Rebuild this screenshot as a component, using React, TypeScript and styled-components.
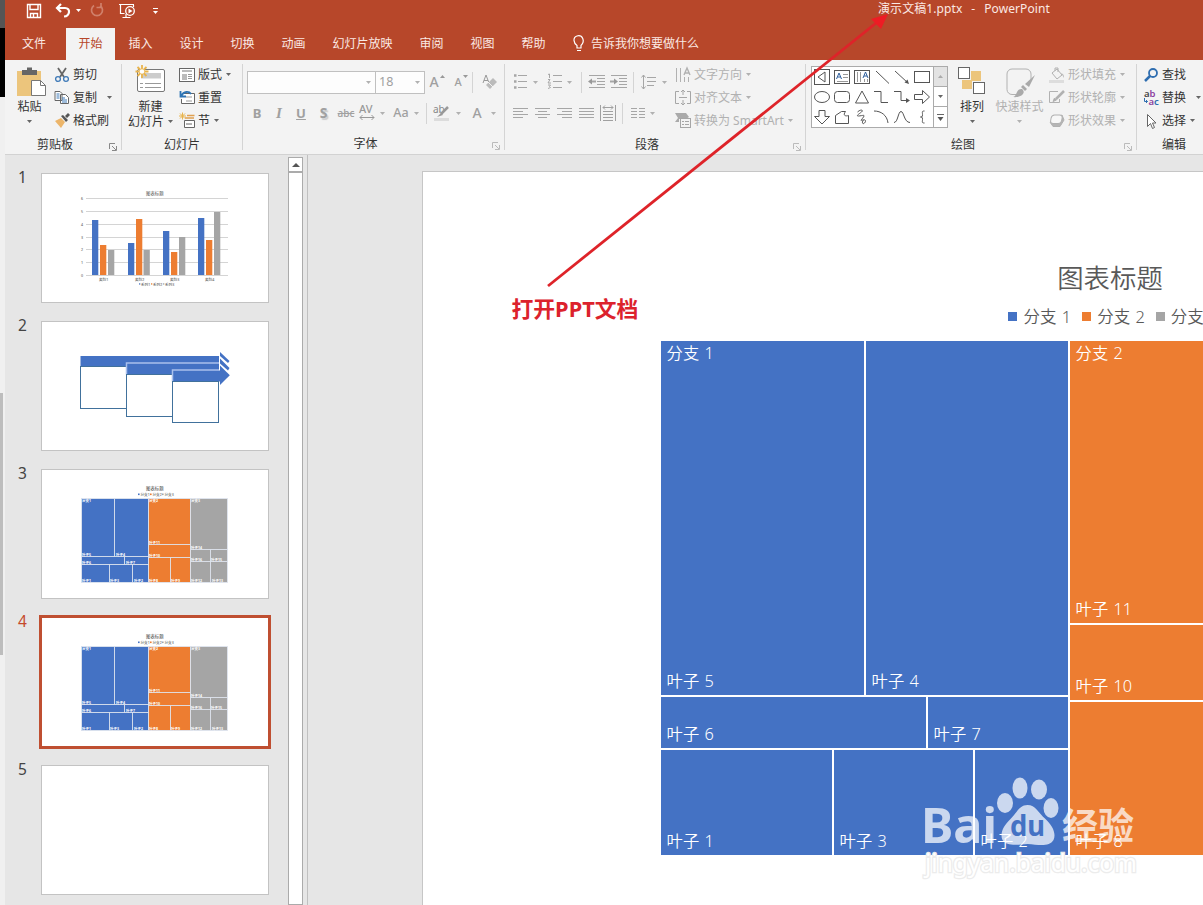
import React from "react";
import styled, { createGlobalStyle, css } from "styled-components";

const ui = `"Noto Sans", "Noto Sans CJK SC", sans-serif`;
const brand = "#b7472a";
const blue = "#4472c4";
const orange = "#ed7d31";
const grey = "#a5a5a5";
const off = "#b1b1b1";

const Global = createGlobalStyle`
  * { box-sizing: border-box; }
  body { margin: 0; overflow: hidden; }
  svg { display: block; flex: none; overflow: visible; }
`;

/* ---------- frame ---------- */
const Screen = styled.div`
  position: relative;
  display: flex;
  width: 1203px;
  height: 905px;
  overflow: hidden;
  font: 12px/16px ${ui};
  color: #333;
`;
const BackWindow = styled.div`
  width: 5px;
  flex: none;
  display: flex;
  flex-direction: column;
  background: #f0f0f0;
`;
const Strip = styled.div<{ h: number; c: string; w?: number }>`
  height: ${(p) => p.h}px;
  width: ${(p) => p.w ?? 5}px;
  background: ${(p) => p.c};
`;
const AppWindow = styled.div`
  flex: 1;
  min-width: 0;
  display: flex;
  flex-direction: column;
`;

/* ---------- title bar and tabs ---------- */
const TitleBar = styled.header`
  height: 28px;
  flex: none;
  display: flex;
  background: ${brand};
  color: #fbe9e4;
`;
const QuickAccess = styled.div`
  display: flex;
  width: 873px;
  padding: 2px 0 0 20px;
`;
const DocTitle = styled.div`
  line-height: 18px;
  white-space: pre;
  word-spacing: 1.3px;
  letter-spacing: 0.08px;
`;
const Tabs = styled.nav`
  height: 32px;
  flex: none;
  display: flex;
  background: ${brand};
  color: #fbe9e4;
`;
const Tab = styled.div<{ w: number; active?: boolean }>`
  width: ${(p) => p.w}px;
  text-align: center;
  line-height: 31px;
  white-space: nowrap;
  ${(p) => p.active && css`background: #f3f3f3; color: ${brand};`}
`;
const FileTab = styled(Tab)`
  margin-right: 3px;
`;
const TellMe = styled.div`
  display: flex;
  gap: 6px;
  padding-left: 14px;
  line-height: 32px;
`;

/* ---------- ribbon ---------- */
const Ribbon = styled.div`
  height: 95px;
  flex: none;
  display: flex;
  overflow: hidden;
  background: #f3f3f3;
  border-bottom: 1px solid #d2d2d2;
`;
const Group = styled.section<{ w: number; last?: boolean }>`
  width: ${(p) => p.w}px;
  flex: none;
  display: flex;
  flex-direction: column;
  margin: 4px 0;
  border-right: ${(p) => (p.last ? 0 : 1)}px solid #d4d4d4;
`;
const GroupBody = styled.div<{ pl?: number }>`
  display: flex;
  height: 69px;
  padding-left: ${(p) => p.pl ?? 0}px;
  margin-top: -1px;
`;
const GroupFoot = styled.div<{ shift?: number }>`
  display: grid;
  grid-template-columns: 16px 1fr 16px;
  height: 19px;
  line-height: 25px;
  text-align: center;
  & > span { transform: translateX(${(p) => p.shift ?? 0}px); }
  & > svg { margin: 11px 0 0 4px; }
`;
const BigButton = styled.div<{ w: number; disabled?: boolean; pt?: number }>`
  width: ${(p) => p.w}px;
  display: flex;
  flex-direction: column;
  align-items: center;
  padding-top: ${(p) => p.pt ?? 3}px;
  color: ${(p) => (p.disabled ? off : "#333")};
  line-height: 15px;
  white-space: nowrap;
`;
const BigIcon = styled.div`
  height: 33px;
`;
const CaretSlot = styled.div`
  height: 15px;
  padding-top: 6px;
`;
const LabelWithCaret = styled.div`
  display: flex;
  align-items: center;
  gap: 4px;
`;
const Stack = styled.div<{ ml?: number }>`
  margin-left: ${(p) => p.ml ?? 0}px;
  display: flex;
  flex-direction: column;
`;
const Command = styled.div<{ disabled?: boolean; gap?: number }>`
  display: flex;
  align-items: center;
  height: 23px;
  white-space: nowrap;
  color: ${(p) => (p.disabled ? off : "#333")};
  & > span { margin: 0 ${(p) => p.gap ?? 4}px 0 3px; }
`;
const ToolRow = styled.div<{ h: number; pl?: number }>`
  display: flex;
  align-items: center;
  height: ${(p) => p.h}px;
  padding-left: ${(p) => p.pl ?? 0}px;
  color: #a0a0a0;
`;
const Tool = styled.div<{ w: number; gap?: number }>`
  width: ${(p) => p.w}px;
  display: flex;
  justify-content: center;
  align-items: center;
  gap: ${(p) => p.gap ?? 6}px;
`;
const Glyph = styled.span<{ s?: number; b?: boolean; i?: boolean; line?: string; shadow?: boolean }>`
  font-size: ${(p) => p.s ?? 14}px;
  font-weight: ${(p) => (p.b ? 700 : 500)};
  font-style: ${(p) => (p.i ? "italic" : "normal")};
  font-family: ${(p) => (p.i ? `"Liberation Serif", serif` : ui)};
  text-decoration: ${(p) => p.line ?? "none"};
  text-shadow: ${(p) => (p.shadow ? "1.5px 1.5px 1px #ccc" : "none")};
`;
const Divider = styled.div`
  width: 1px;
  height: 21px;
  background: #d4d4d4;
`;
const Combo = styled.div<{ w: number }>`
  width: ${(p) => p.w}px;
  height: 23px;
  margin-right: -1px;
  display: flex;
  align-items: center;
  justify-content: space-between;
  padding: 0 4px 0 3px;
  border: 1px solid #c0c0c0;
  background: #fdfdfd;
  font-size: 12.5px;
`;
const Gallery = styled.div`
  display: flex;
  width: 137px;
  height: 62px;
  margin-top: 3px;
  border: 1px solid #ababab;
  background: #fff;
`;
const Shapes = styled.div`
  display: grid;
  grid-template-columns: repeat(6, 20px);
  grid-auto-rows: 20px;
  width: 121px;
  place-items: center;
`;
const Steps = styled.div`
  flex: 1;
  display: grid;
  grid-template-rows: repeat(3, 1fr);
`;
const Step = styled.div<{ disabled?: boolean }>`
  display: flex;
  align-items: center;
  justify-content: center;
  border-left: 1px solid #ababab;
  border-bottom: 1px solid #ababab;
  background: ${(p) => (p.disabled ? "#e3e3e3" : "#fff")};
  &:last-child { border-bottom: 0; }
`;

/* ---------- workspace ---------- */
const Workspace = styled.main`
  flex: 1;
  min-height: 0;
  display: flex;
  background: #e6e6e6;
`;
const ThumbPane = styled.aside`
  width: 283px;
  flex: none;
  padding-top: 18px;
  display: flex;
  flex-direction: column;
  gap: 18px;
`;
const ThumbRow = styled.div<{ active?: boolean }>`
  display: flex;
  padding-left: 13px;
  height: 130px;
  flex: none;
  color: ${(p) => (p.active ? "#c5492b" : "#444")};
  font-size: 15.5px;
  line-height: 8px;
`;
const ThumbNo = styled.div`
  width: 23px;
`;
const Thumb = styled.div<{ active?: boolean }>`
  width: 228px;
  height: 130px;
  background: #fff;
  border: 1px solid ${(p) => (p.active ? "#fff" : "#c3c3c3")};
  outline: ${(p) => (p.active ? "3px solid #bf4f31" : "none")};
  outline-offset: -1px;
`;
const ScrollTrack = styled.div`
  width: 15px;
  margin-top: 2px;
  flex: none;
  background: #fff;
  border: 1px solid #ababab;
`;
const ScrollUp = styled.div`
  height: 15px;
  display: flex;
  align-items: center;
  justify-content: center;
  border-bottom: 2px solid #ababab;
`;
const EditPane = styled.div`
  flex: 1;
  min-width: 0;
  margin-left: 4px;
  border-left: 1px solid #c0c0c0;
  padding: 16px 0 0 114px;
`;
const Slide = styled.div`
  width: 1376px;
  height: 774px;
  background: #fff;
  border: 1px solid #c6c6c6;
  padding: 84px 0 0 238px;
`;
const ChartBox = styled.div`
  width: 898px;
  color: #595959;
  font-weight: 350;
`;
const ChartTitle = styled.div`
  font-size: 26.4px;
  line-height: 44px;
  text-align: center;
`;
const Legend = styled.div`
  display: flex;
  justify-content: center;
  gap: 11px;
  height: 32px;
  margin-bottom: 9px;
  padding-left: 7px;
  font-size: 16.5px;
  line-height: 31px;
  word-spacing: 1px;
  white-space: nowrap;
`;
const LegendItem = styled.div<{ c: string }>`
  display: flex;
  align-items: center;
  gap: 6px;
  &::before {
    content: "";
    width: 9px;
    height: 9px;
    background: ${(p) => p.c};
  }
`;
const TreeMap = styled.div`
  display: flex;
  gap: 2px;
  height: 514px;
`;
const Branch = styled.div<{ w: number }>`
  width: ${(p) => p.w}px;
  display: flex;
  flex-direction: column;
  gap: 2px;
`;
const Band = styled.div<{ h: number }>`
  height: ${(p) => p.h}px;
  display: flex;
  gap: 2px;
`;
const Leaf = styled.div<{ w: number; c: string }>`
  width: ${(p) => p.w}px;
  background: ${(p) => p.c};
  color: #fff;
  display: flex;
  flex-direction: column;
  justify-content: space-between;
  padding: 0 5.6px 2px;
  font-size: 16.3px;
  line-height: 24px;
  word-spacing: 1px;
  white-space: nowrap;
  & > :only-child { margin-top: auto; }
`;

/* ---------- overlays ---------- */
const Overlay = styled.svg`
  position: absolute;
  left: 0;
  top: 0;
  pointer-events: none;
`;
const Callout = styled.div`
  position: absolute;
  left: 511.5px;
  top: 293.5px;
  font-size: 21.8px;
  line-height: 30px;
  font-weight: 700;
  color: #dc222c;
  white-space: nowrap;
`;

/* ---------- icons ---------- */
type IconProps = { w?: number; h?: number; c?: string; f?: string; children?: React.ReactNode };
const Icon = ({ w = 16, h = 16, c = "#666", f = "none", children }: IconProps) => (
  <svg width={w} height={h} viewBox={`0 0 ${w} ${h}`} fill={f} stroke={c}>{children}</svg>
);
const Caret = ({ c = "#666" }: { c?: string }) => (
  <svg width="5" height="3" viewBox="0 0 5 3"><path d="M0 0h5L2.5 3z" fill={c} /></svg>
);
const Launcher = ({ c = "#888" }: { c?: string }) => (
  <Icon w={8} h={8} c={c}><path d="M.5 6V.5H6M3 3l4 4M7.5 3v4.5H3" /></Icon>
);
const Lines = ({ rows, w = 15 }: { rows: [number, number][]; w?: number }) => (
  <Icon w={w} h={14} c="#a6a6a6">
    {rows.map(([a, b], i) => <path key={i} d={`M${a} ${i * 3 + 2.5}H${b}`} />)}
  </Icon>
);

const shapes = [
  <><rect x="2.5" y="2.5" width="15" height="15" /><path d="M13 5v10L6 10z" /></>,
  <><rect x="2.5" y="3.5" width="15" height="13" /><path d="M4.5 12L7 6l2.5 6M5.5 10h3" stroke="#2f5f9c" /><path d="M11 7.5h5M11 10.5h5M5 14.5h11" stroke="#999" /></>,
  <><rect x="2.5" y="3.5" width="15" height="13" /><path d="M5.5 5v10M8.5 5v10M12.5 12v3M15.5 12v3" stroke="#999" /><path d="M11 11l2.5-6 2.5 6M12 9h3" stroke="#2f5f9c" /></>,
  <path d="M4 4l13 12.5" />,
  <><path d="M3 4l13 12" /><path d="M17 17l-4.5-1.5 3-3z" fill="#555" stroke="none" /></>,
  <rect x="2.5" y="4.5" width="15" height="11" />,
  <ellipse cx="10" cy="10" rx="7.5" ry="5.5" />,
  <rect x="2.5" y="4.5" width="15" height="11" rx="3" />,
  <path d="M10 4l6.5 12h-13z" />,
  <path d="M2 4.5h7v11h7" />,
  <><path d="M2 4.5h7v9h6" /><path d="M18 13.5l-4-2.5v5z" fill="#555" stroke="none" /></>,
  <path d="M2.5 7.5h8v-4l7 6.5-7 6.5v-4h-8z" />,
  <path d="M7 3.5h6v6h4.5L10 17 2.5 9.5H7z" />,
  <path d="M3.5 16.5v-8l6-4h4c-3 4 0 5 3 4v8z" />,
  <path d="M5.5 5c3-3 6.5-2 4 0s-6 4-3 4 7-2 5 1-4 4-1 3 4 1 2 3-3-1-1-3" />,
  <path d="M2 4c7 0 13 4 14 12" />,
  <path d="M2 15.5c4 0 4-11 7-11s3 11 9 11" />,
  <path d="M12.5 4c-3 0-2 1-2 3.5S10 10 8.5 10c1.5 0 2 0 2 2.5s-1 3.500 2 3.500" />,
];

const tabs: [string, number][] = [["插入", 51], ["设计", 51], ["切换", 51], ["动画", 51], ["幻灯片放映", 87], ["审阅", 51], ["视图", 51], ["帮助", 51]];

/* ---------- thumbnails ---------- */
const tiny = { fontSize: 3.6, fill: "#666", fontWeight: 500 };
const bars: [number, number, string][] = [
  [92, 220, blue], [100, 245, orange], [108, 250, grey], [128, 243, blue], [136, 219, orange], [143.5, 250, grey],
  [163, 231, blue], [171, 252, orange], [179, 237, grey], [198, 218, blue], [206, 240, orange], [214, 212, grey],
];
const ColumnThumb = () => (
  <svg width="226" height="128" viewBox="42 174 226 128">
    <text x="146" y="194.5" fontSize="4.4" fill="#555">图表标题</text>
    {[198.5, 211.5, 224.5, 237.5, 249.5, 262.5, 275.5].map((y, i) => (
      <g key={y}><path d={`M86 ${y}H228`} stroke="#d4d4d4" /><text x="81" y={y + 1.2} {...tiny}>{6 - i}</text></g>
    ))}
    {bars.map(([x, y, c]) => <rect key={x} x={x} y={y} width="6.3" height={275 - y} fill={c} />)}
    {[99, 135, 170, 205].map((x, i) => <text key={x} x={x} y="280.5" {...tiny}>类别{i + 1}</text>)}
    {[blue, orange, grey].map((c, i) => (
      <g key={c}><rect x={139 + i * 12} y="283.3" width="1.3" height="1.3" fill={c} /><text x={141 + i * 12} y="285.5" {...tiny}>系列{i + 1}</text></g>
    ))}
  </svg>
);
const steps: [number, number, number, number][] = [[80.5, 356, 366.5, 42], [126.5, 363.5, 374.5, 42], [172.5, 370.5, 381.5, 41]];
const heads = ["M220 352l9.500 9-1.500 2-8-7z", "M220 358.500l9.500 9.500-1.500 2.500-8-7z", "M220 365.500l9.800 9.700-9.800 9.700z"];
const ArrowThumb = () => (
  <svg width="226" height="128" viewBox="42 322 226 128">
    {heads.map((d) => <path key={d} d={d} fill={blue} />)}
    {steps.map(([x, y, b, h]) => (
      <g key={x}>
        <rect x={x} y={y} width={(x > 150 ? 220.5 : 219) - x} height={b - y} fill={blue} />
        {x > 100 && <path d={`M${x} ${b}V${y - 0.5}H219`} fill="none" stroke="#a9c0ec" strokeWidth="1.5" />}
        <rect x={x} y={b} width="46" height={h} fill="#fff" stroke="#41719c" />
      </g>
    ))}
  </svg>
);
const leafLabels: [number, number, string][] = [
  [82, 502, "分支1"], [149, 502, "分支2"], [191, 502, "分支3"], [82, 555.5, "叶子5"], [116, 555.5, "叶子4"],
  [82, 563.5, "叶子6"], [126, 563.5, "叶子7"], [82, 581.5, "叶子1"], [110, 581.5, "叶子3"], [134, 581.5, "叶子2"],
  [149, 543.5, "叶子11"], [149, 556.5, "叶子10"], [149, 581.5, "叶子8"], [171, 581.5, "叶子9"],
  [191, 548.5, "叶子14"], [191, 560.5, "叶子16"], [211, 560.5, "叶子15"], [191, 581.5, "叶子12"], [212, 581.5, "叶子13"],
];
const TreeThumb = () => (
  <svg width="226" height="128" viewBox="42 470 226 128">
    <text x="146" y="489.5" fontSize="4.4" fill="#444">图表标题</text>
    {[blue, orange, grey].map((c, i) => (
      <g key={c}><rect x={138 + i * 12} y="493.5" width="1.6" height="1.6" fill={c} /><text x={140.5 + i * 12} y="495.8" {...tiny}>分支{i + 1}</text></g>
    ))}
    <rect x="81.5" y="498.5" width="67" height="84" fill={blue} />
    <rect x="148.5" y="498.5" width="42" height="84" fill={orange} />
    <rect x="190.5" y="498.5" width="37" height="84" fill={grey} />
    <path d="M81.5 498.5H227.5V582.5H81.5zM114.5 498.5V556.5M81.5 556.5H148.5M124.5 556.5V564.5M81.5 564.5H148.5M109.5 564.5V582.5M132.5 564.5V582.5M148.5 498.5V582.5M148.5 544.5H190.5M148.5 557.5H190.5M170.5 557.5V582.5M190.5 498.5V582.5M190.5 549.5H227.5M190.5 561.5H227.5M210.5 549.5V582.5" fill="none" stroke="#dfe4ee" strokeWidth=".9" />
    {leafLabels.map(([x, y, t]) => <text key={t} x={x} y={y} fontSize="3.5" fontWeight="700" fill="#fff">{t}</text>)}
  </svg>
);
const thumbs = [ColumnThumb, ArrowThumb, TreeThumb, TreeThumb, null];

export default function App() {
  return (
    <Screen>
      <Global />
      <BackWindow>
        <Strip h={28} c="#555" />
        <Strip h={69} c="#000" />
        <Strip h={296} c="#f0f0f0" />
        <Strip h={262} w={3} c="#bdbdbd" />
      </BackWindow>
      <AppWindow>
        <TitleBar>
          <QuickAccess>
            <Icon w={27} h={18} c="#fff">
              <path d="M2.5 2.5h13v13h-13zM5 2.500v5h8v-5M5.500 15.500v-4h7v4M8.500 12v3" strokeWidth="1.4" />
            </Icon>
            <Icon w={38} h={18} c="#fff">
              <path d="M9 2L5 6l4 4M5.500 6H13c6 0 5 8-1 8.500" strokeWidth="2.2" />
              <path d="M24 7h5l-2.500 3z" fill="#fff" stroke="none" />
            </Icon>
            <Icon w={28} h={18} c="#d0806b">
              <path d="M4 3.500a5.500 5.500 0 1 0 6 0M11 1v4.500H6.500" strokeWidth="1.7" />
            </Icon>
            <Icon w={30} h={18} c="#fff">
              <path d="M1 2.500h15M2.500 3v8.500h4M8 12v3.500M4.500 15.500h8M15.500 3v2" strokeWidth="1.2" />
              <circle cx="12" cy="9" r="4.300" strokeWidth="1.3" /><path d="M10.500 6.500v5l4-2.500z" fill="#fff" stroke="none" />
            </Icon>
            <Icon w={12} h={18} c="#fff"><path d="M5 6.500h5" /><path d="M5 9h5l-2.500 3z" fill="#fff" stroke="none" /></Icon>
          </QuickAccess>
          <DocTitle>演示文稿1.pptx  -  PowerPoint</DocTitle>
        </TitleBar>
        <Tabs>
          <FileTab w={58}>文件</FileTab>
          <Tab w={49} active>开始</Tab>
          {tabs.map(([t, w]) => <Tab key={t} w={w}>{t}</Tab>)}
          <TellMe>
            <Icon w={12} h={30} c="#fff">
              <path d="M4 20v-2.500C.500 15-.500 9.500 4 8c5.500-1.500 8.500 5 4 9.500V20zM4 22.500h4" strokeWidth="1.2" />
            </Icon>
            <span>告诉我你想要做什么</span>
          </TellMe>
        </Tabs>

        <Ribbon>
          <Group w={117}>
            <GroupBody pl={9}>
              <BigButton w={31}>
                <BigIcon>
                  <Icon w={26} h={32} c="none">
                    <path d="M0 5h24v25H0z" fill="#ecc57c" /><path d="M5 4h5V1.500h5V4h5v5H5z" fill="#666" />
                    <path d="M14.500 14.500h9l5 5v10h-14z" fill="#fff" stroke="#777" /><path d="M23.500 14.500v5h5" stroke="#777" />
                  </Icon>
                </BigIcon>
                粘贴
                <CaretSlot><Caret /></CaretSlot>
              </BigButton>
              <Stack ml={9}>
                <Command>
                  <Icon><path d="M4 1l6 9M12 1L6 10" strokeWidth="1.8" /><circle cx="4" cy="12" r="2.4" stroke="#3f7ab8" strokeWidth="1.3" /><circle cx="12" cy="12" r="2.4" stroke="#3f7ab8" strokeWidth="1.3" /></Icon>
                  <span>剪切</span>
                </Command>
                <Command gap={10}>
                  <Icon><path d="M1 1.500h5l2 2v7H1zM6.500 4.500h5l3 3v6h-8z" fill="#fff" /><path d="M2.500 4h3M2.500 6h3M2.500 8h3M8 8h3M8 10h5M8 12h5" stroke="#3f7ab8" /></Icon>
                  <span>复制</span><Caret />
                </Command>
                <Command>
                  <Icon c="none"><path d="M1 8l6-3 4 4-4 6z" fill="#ecb56a" /><path d="M7 3l2-1 5 5-2 2zM11 3l3-3 2 2-3 3z" fill="#555" /></Icon>
                  <span>格式刷</span>
                </Command>
              </Stack>
            </GroupBody>
            <GroupFoot shift={-8}><i /><span>剪贴板</span><Launcher /></GroupFoot>
          </Group>

          <Group w={121}>
            <GroupBody pl={5}>
              <BigButton w={47}>
                <BigIcon>
                  <Icon w={30} h={30}>
                    <rect x="1.5" y="3.5" width="27" height="22" rx="1.5" fill="#fff" stroke="#777" /><path d="M5 7h20v5.500H5z" fill="#ccc" stroke="none" /><path d="M4 17.500h3M9 17.500h16M4 21.500h3M9 21.500h16" stroke="#999" />
                    <path d="M6-1v13M-.5 5.500h13M1.500 1l9 9M10.500 1l-9 9" stroke="#e9b44c" strokeWidth="1.8" /><circle cx="6" cy="5.5" r="2.3" fill="#fff" stroke="none" />
                  </Icon>
                </BigIcon>
                新建
                <LabelWithCaret>幻灯片<Caret /></LabelWithCaret>
              </BigButton>
              <Stack ml={5}>
                <Command>
                  <Icon><rect x=".5" y="1.5" width="15" height="13" fill="#fff" /><path d="M3 3h10v2H3zM3 7h5v6H3z" fill="#bbb" stroke="none" /><path d="M9 7.500h4M9 9.500h4M9 11.500h4" stroke="#999" /></Icon>
                  <span>版式</span><Caret />
                </Command>
                <Command>
                  <Icon><path d="M4.500 3.500h11v10h-13V9" fill="#fff" /><path d="M7 7h6M7 11h6" stroke="#999" /><path d="M1.500 1v5.500H7M2 6C5 1 10 1 12 4" stroke="#2f75b5" strokeWidth="1.8" /></Icon>
                  <span>重置</span>
                </Command>
                <Command>
                  <Icon><path d="M8 2.500h7.500M6 5h9" stroke="#e0a050" strokeWidth="1.5" /><path d="M5.500 7.500h10v7h-10zM7 11h6" fill="#fff" /><path d="M3.500-.5v7M0 3h7M1 .5l5 5M6 .5l-5 5" stroke="#e9b44c" /></Icon>
                  <span>节</span><Caret />
                </Command>
              </Stack>
            </GroupBody>
            <GroupFoot><i /><span>幻灯片</span></GroupFoot>
          </Group>

          <Group w={262}>
            <GroupBody pl={3}>
              <Stack>
                <ToolRow h={38} pl={1}>
                  <Combo w={129}><i /><Caret c={off} /></Combo>
                  <Combo w={50}><span>18</span><Caret c={off} /></Combo>
                  <Tool w={31}><Glyph s={14}>A</Glyph><Icon w={5} h={14} c="none"><path d="M-5 3h5l-2.500-3z" fill="#999" /></Icon></Tool>
                  <Tool w={17}><Glyph s={11}>A</Glyph><Icon w={5} h={14} c="none"><path d="M-5 0h5l-2.500 3z" fill="#999" /></Icon></Tool>
                  <Divider />
                  <Tool w={32}><Icon w={15} h={16} c="#999"><path d="M1 9L4 1l3 8M2 6.500h4" /><path d="M4 11l7-7 4 4-7 7z" fill="#bbb" stroke="none" /><path d="M6 8l5 5" stroke="#f3f3f3" /></Icon></Tool>
                </ToolRow>
                <ToolRow h={24}>
                  <Tool w={22}><Glyph s={13} b>B</Glyph></Tool>
                  <Tool w={22}><Glyph s={15} b i>I</Glyph></Tool>
                  <Tool w={22}><Glyph s={13} b line="underline">U</Glyph></Tool>
                  <Tool w={23}><Glyph s={14} b shadow>S</Glyph></Tool>
                  <Tool w={22}><Glyph s={10} line="line-through">abc</Glyph></Tool>
                  <Tool w={30} gap={5}>
                    <Icon w={16} h={16} c="#999"><text x="0" y="8" fontSize="11" fontWeight="500" fill="#999" stroke="none">AV</text><path d="M1 12.500h14M3.500 10l-2.500 2.500 2.500 2.500M12.500 10l2.500 2.500-2.500 2.500" /></Icon>
                    <Caret c={off} />
                  </Tool>
                  <Tool w={38} gap={5}><Glyph s={12.5}>Aa</Glyph><Caret c={off} /></Tool>
                  <Tool w={2}><Divider /></Tool>
                  <Tool w={40}>
                    <Icon w={17} h={16}><text x="0" y="8" fontSize="10" fill="#888" stroke="none">ab</text><path d="M15 2L8 9" stroke="#999" strokeWidth="2.5" /><path d="M1 13h15v3H1z" fill="#dcdcdc" stroke="none" /><path d="M4 12l4-4 2 2z" fill="#999" stroke="none" /></Icon>
                    <Caret c={off} />
                  </Tool>
                  <Tool w={34} gap={9}><Glyph s={14}>A</Glyph><Caret c={off} /></Tool>
                </ToolRow>
              </Stack>
            </GroupBody>
            <GroupFoot shift={-8}><i /><span>字体</span><Launcher c="#bbb" /></GroupFoot>
          </Group>

          <Group w={301}>
            <GroupBody pl={7}>
              <Stack>
                <ToolRow h={38}>
                  <Tool w={26}><Icon w={14} h={16} c="#a6a6a6"><path d="M5 1.500h9M5 7.500h9M5 13.500h9" /><path d="M1 1.500h2.500M1 7.500h2.500M1 13.500h2.500" strokeWidth="2.4" /></Icon><Caret c={off} /></Tool>
                  <Tool w={43} gap={5}><Icon w={15} h={16} c="#a6a6a6"><path d="M6 1.500h9M6 7.500h9M6 13.500h9M1 .500l1.500-.5v4M1 5.500h2l-2 3.500h3M1 11h2.500l-1 1.500 1 1-2.500 1" /></Icon><Caret c={off} /></Tool>
                  <Divider />
                  <Tool w={28}><Icon w={17} h={14} c="#a6a6a6"><path d="M1 .500h16M9 3.500h8M9 6.500h8M9 9.500h8M1 12.500h16" /><path d="M8 6.500H2" strokeWidth="2" /><path d="M0 6.500l4-3v6z" fill="#999" stroke="none" /></Icon></Tool>
                  <Tool w={17}><Icon w={17} h={14} c="#a6a6a6"><path d="M1 .500h16M9 3.500h8M9 6.500h8M9 9.500h8M1 12.500h16" /><path d="M0 6.500h5" strokeWidth="2" /><path d="M8 6.500l-4-3v6z" fill="#999" stroke="none" /></Icon></Tool>
                  <Tool w={12}><Divider /></Tool>
                  <Tool w={30}><Icon w={15} h={18} c="#a6a6a6"><path d="M6 4.500h9M6 8.500h9M6 12.500h7M2.500 2v14M.500 4.500l2-2.500 2 2.500M.500 13.500l2 2.500 2-2.500" /></Icon><Caret c={off} /></Tool>
                </ToolRow>
                <ToolRow h={24}>
                  <Tool w={17}><Lines rows={[[0, 15], [0, 10], [0, 15], [0, 10]]} /></Tool>
                  <Tool w={27}><Lines rows={[[0, 15], [3, 12], [0, 15], [3, 12]]} /></Tool>
                  <Tool w={17}><Lines rows={[[0, 15], [5, 15], [0, 15], [5, 15]]} /></Tool>
                  <Tool w={27}><Lines rows={[[0, 15], [0, 15], [0, 15], [0, 15]]} /></Tool>
                  <Tool w={15}><Icon w={16} h={16} c="#a0a0a0"><path d="M.500 0v16M15.500 0v16M3 2.500h10M5 .500l-2 2 2 2M11 .500l2 2-2 2M3 6.500h10M3 9.500h10M3 12.500h10M3 15.500h10" /></Icon></Tool>
                  <Tool w={14}><Divider /></Tool>
                  <Tool w={28} gap={5}><Icon w={14} h={14} c="#a6a6a6"><path d="M0 2.500h6M8 2.500h6M0 5.500h6M8 5.500h6M0 8.500h6M8 8.500h6M0 11.500h6M8 11.500h6" /></Icon><Caret c={off} /></Tool>
                </ToolRow>
              </Stack>
              <Stack ml={6}>
                <Command disabled gap={4}>
                  <Icon c={off}><path d="M1.500 1v14M5.500 1v14M9.500 10v5M13.500 10v5" /><path d="M9 8l3-7 3 7M10 6h4" strokeWidth="1.4" /></Icon>
                  <span>文字方向</span><Caret c={off} />
                </Command>
                <Command disabled gap={4}>
                  <Icon c="#a6a6a6"><path d="M4 1.500H.500v12H4M12 1.500h3.500v12H12M4 7.500h8M8 0v5M6 2l2-2 2 2M8 10v5M6 13l2 2 2-2" /></Icon>
                  <span>对齐文本</span><Caret c={off} />
                </Command>
                <Command disabled gap={4}>
                  <Icon c="#a6a6a6"><path d="M0 0h11l3 4-3 2H4v3H0l3-4z" fill="#aaa" stroke="none" /><rect x="5.5" y="5.5" width="10" height="9" fill="#f3f3f3" /><path d="M7 8.500h2M10 8.500h4M7 11.500h2M10 11.500h4" /></Icon>
                  <span>转换为 SmartArt</span><Caret c={off} />
                </Command>
              </Stack>
            </GroupBody>
            <GroupFoot shift={-8}><i /><span>段落</span><Launcher c="#bbb" /></GroupFoot>
          </Group>

          <Group w={331}>
            <GroupBody pl={5}>
              <Gallery>
                <Shapes>{shapes.map((s, i) => <Icon key={i} w={20} h={20} c="#555">{s}</Icon>)}</Shapes>
                <Steps>
                  <Step disabled><Icon w={5} h={3} c="none"><path d="M0 3h5L2.500 0z" fill="#aaa" /></Icon></Step>
                  <Step><Caret /></Step>
                  <Step><Icon w={7} h={7}><path d="M0 .500h7" /><path d="M.500 3h6l-3 4z" fill="#555" stroke="none" /></Icon></Step>
                </Steps>
              </Gallery>
              <BigButton w={48}>
                <BigIcon>
                  <Icon w={28} h={28}>
                    <path d="M13 5h10v10H13zM4 14h10v9H4z" fill="#ecc57c" stroke="none" /><rect x=".5" y="1.5" width="11" height="11" fill="#fff" /><rect x="15.5" y="16.5" width="11" height="11" fill="#fff" />
                  </Icon>
                </BigIcon>
                排列
                <CaretSlot><Caret /></CaretSlot>
              </BigButton>
              <BigButton w={47} disabled>
                <BigIcon>
                  <Icon w={30} h={32} c={off}>
                    <path d="M12 28.500H7a5 5 0 0 1-5-5V8a5 5 0 0 1 5-5h14a5 5 0 0 1 5 5v6" /><path d="M30 9l-6 12-4-3z" fill="#aaa" stroke="none" /><path d="M18 19l4 4-2 2-4-4zM8 31c4 0 3-9 9-8 5 4-2 9-9 8z" fill="#aaa" stroke="none" />
                  </Icon>
                </BigIcon>
                快速样式
                <CaretSlot><Caret c={off} /></CaretSlot>
              </BigButton>
              <Stack ml={6}>
                <Command disabled gap={4}>
                  <Icon c={off}><path d="M3 6l5-4 5 6-5 4zM6 4V1h3v4" /><path d="M12 6c3 1 3 3 3 5z" fill="#bbb" stroke="none" /><path d="M0 13h15v3H0z" fill="#ddd" stroke="none" /></Icon>
                  <span>形状填充</span><Caret c={off} />
                </Command>
                <Command disabled gap={4}>
                  <Icon c={off}><path d="M9 1.500H.500v11h10V9" /><path d="M15 1L7 9" strokeWidth="2.5" /><path d="M4 11.500l1.500-3.500 2 2z" fill="#aaa" /></Icon>
                  <span>形状轮廓</span><Caret c={off} />
                </Command>
                <Command disabled gap={4}>
                  <Icon c={off}><path d="M1 9l3 4.500h7L15 7l-2-5z" fill="#b5b5b5" /><rect x="2" y="2" width="11" height="8.5" rx="3" fill="#f7f7f7" transform="skewX(-10) translate(1 0)" /></Icon>
                  <span>形状效果</span><Caret c={off} />
                </Command>
              </Stack>
            </GroupBody>
            <GroupFoot shift={-8}><i /><span>绘图</span><Launcher c="#bbb" /></GroupFoot>
          </Group>

          <Group w={78} last>
            <GroupBody pl={6}>
              <Stack>
                <Command>
                  <Icon><circle cx="10" cy="6" r="4" stroke="#2f6eb0" strokeWidth="1.8" /><path d="M7 9l-5 5" stroke="#2f6eb0" strokeWidth="2.5" /></Icon>
                  <span>查找</span>
                </Command>
                <Command gap={10}>
                  <Icon c="none"><text x="1" y="6.5" fontSize="9.5" fontWeight="600" fill="#444">a<tspan fill="#8b3fa0">b</tspan></text><text x="5.5" y="14.5" fontSize="9.5" fontWeight="600" fill="#8b3fa0">a<tspan fill="#2f6eb0">c</tspan></text><path d="M1.500 8v3.500h3M3 10l1.500 1.500L3 13" stroke="#2f6eb0" /></Icon>
                  <span>替换</span><Caret />
                </Command>
                <Command gap={4}>
                  <Icon><path d="M4.500 1.500v12l3-3 2 5 2-1-2-4.500h3.500z" fill="#fff" /></Icon>
                  <span>选择</span><Caret />
                </Command>
              </Stack>
            </GroupBody>
            <GroupFoot shift={-2}><i /><span>编辑</span></GroupFoot>
          </Group>
        </Ribbon>

        <Workspace>
          <ThumbPane>
            {thumbs.map((T, i) => (
              <ThumbRow key={i} active={i === 3}>
                <ThumbNo>{i + 1}</ThumbNo>
                <Thumb active={i === 3}>{T && <T />}</Thumb>
              </ThumbRow>
            ))}
          </ThumbPane>
          <ScrollTrack>
            <ScrollUp><Icon w={8} h={4} c="none"><path d="M0 4h8L4 0z" fill="#555" /></Icon></ScrollUp>
          </ScrollTrack>
          <EditPane>
            <Slide>
              <ChartBox>
                <ChartTitle>图表标题</ChartTitle>
                <Legend>
                  <LegendItem c={blue}>分支 1</LegendItem>
                  <LegendItem c={orange}>分支 2</LegendItem>
                  <LegendItem c={grey}>分支 3</LegendItem>
                </Legend>
                <TreeMap>
                  <Branch w={407}>
                    <Band h={354}>
                      <Leaf c={blue} w={203}><span>分支 1</span><span>叶子 5</span></Leaf>
                      <Leaf c={blue} w={202}><span>叶子 4</span></Leaf>
                    </Band>
                    <Band h={51}>
                      <Leaf c={blue} w={265}><span>叶子 6</span></Leaf>
                      <Leaf c={blue} w={140}><span>叶子 7</span></Leaf>
                    </Band>
                    <Band h={105}>
                      <Leaf c={blue} w={171}><span>叶子 1</span></Leaf>
                      <Leaf c={blue} w={139}><span>叶子 3</span></Leaf>
                      <Leaf c={blue} w={93}><span>叶子 2</span></Leaf>
                    </Band>
                  </Branch>
                  <Branch w={257}>
                    <Band h={282}><Leaf c={orange} w={257}><span>分支 2</span><span>叶子 11</span></Leaf></Band>
                    <Band h={75}><Leaf c={orange} w={257}><span>叶子 10</span></Leaf></Band>
                    <Band h={153}><Leaf c={orange} w={257}><span>叶子 8</span></Leaf></Band>
                  </Branch>
                </TreeMap>
              </ChartBox>
            </Slide>
          </EditPane>
        </Workspace>
      </AppWindow>

      <Overlay width="1203" height="905" viewBox="0 0 1203 905">
        <path d="M548 286L878 21.5" stroke="#de2329" strokeWidth="2.8" />
        <path d="M888 14l-7 15-10-10z" fill="#ed1c24" />
        <g fill="#fff" fillOpacity=".72">
          <ellipse cx="1005" cy="803" rx="8" ry="10" /><ellipse cx="1020" cy="788" rx="7.5" ry="10.5" />
          <ellipse cx="1039" cy="789.5" rx="8" ry="10" /><ellipse cx="1051" cy="808" rx="7.5" ry="10" />
          <path d="M1027.500 805c8 0 11 8 18 14 7 7 11 14 8 21-4 7-14 5-26 4-12 1-21 2-25-4-3-7 1-14 8-21 6-6 9-14 17-14z" />
          <text x="921" y="843" fontSize="47.5" fontWeight="700" textLength="76" lengthAdjust="spacingAndGlyphs">Bai</text>
          <text x="1062" y="840" fontSize="37" fontWeight="700" textLength="72" lengthAdjust="spacingAndGlyphs">经验</text>
        </g>
        <text x="1010" y="836" fontSize="29" fontWeight="700" textLength="35" lengthAdjust="spacingAndGlyphs" fill={blue}>du</text>
        <text x="925" y="872" fontSize="25" textLength="212" lengthAdjust="spacingAndGlyphs" fill="#fff" stroke="#ececec" strokeWidth="2.6" paintOrder="stroke">jingyan.baidu.com</text>
      </Overlay>
      <Callout>打开PPT文档</Callout>
    </Screen>
  );
}
